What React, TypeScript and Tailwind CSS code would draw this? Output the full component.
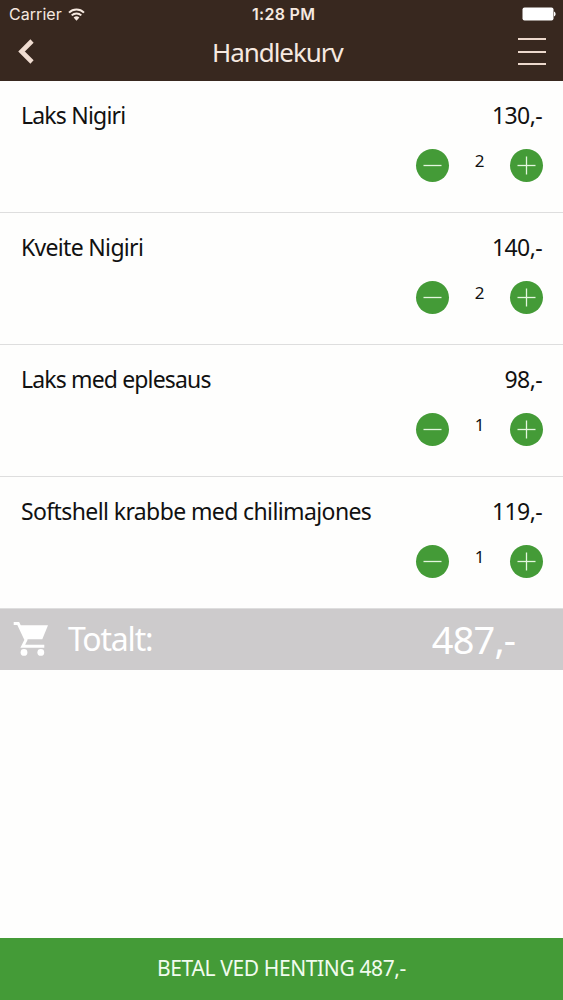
import { useState } from "react";

type CartItem = {
  id: number;
  name: string;
  unitPrice: number;
  quantity: number;
  nameClass: string;
};

const initialItems: CartItem[] = [
  { id: 1, name: "Laks Nigiri", unitPrice: 65, quantity: 2, nameClass: "tracking-[-0.8px]" },
  { id: 2, name: "Kveite Nigiri", unitPrice: 70, quantity: 2, nameClass: "tracking-[-0.68px]" },
  { id: 3, name: "Laks med eplesaus", unitPrice: 98, quantity: 1, nameClass: "tracking-[-0.85px]" },
  {
    id: 4,
    name: "Softshell krabbe med chilimajones",
    unitPrice: 119,
    quantity: 1,
    nameClass: "tracking-[-0.61px]",
  },
];

const StatusBar = () => (
  <div className="relative flex h-7 items-center justify-between pr-[7px] pl-[9px] font-['Inter','Liberation_Sans',sans-serif]">
    <div className="flex items-center gap-[6px]">
      <span className="text-[16px] tracking-[0.05px]">Carrier</span>
      <svg className="h-[13px] w-[17px]" viewBox="0 0 17 13" fill="none">
        <path d="M1 4.6a10.6 10.6 0 0 1 15 0" stroke="currentColor" strokeWidth="2" />
        <path d="M3.7 7.4a6.8 6.8 0 0 1 9.6 0" stroke="currentColor" strokeWidth="2" />
        <path d="M8.5 12.7 5.6 9.6a4.1 4.1 0 0 1 5.8 0Z" fill="currentColor" />
      </svg>
    </div>
    <span className="absolute left-[252px] text-[16px] font-semibold tracking-[0.3px]">
      1:28 PM
    </span>
    <svg className="h-[14px] w-[34px]" viewBox="0 0 34 14" fill="#fff">
      <rect x="0.5" y="0.5" width="31" height="13" rx="2" />
      <path d="M32 4.5c1 .4 1.6 1.3 1.6 2.5S33 9.1 32 9.5Z" />
    </svg>
  </div>
);

const Header = () => (
  <header className="h-[81px] shrink-0 bg-[#38281f] text-[#f6e9e0]">
    <StatusBar />
    <div className="relative flex h-[53px] items-center justify-between pr-[17px] pb-[7px] pl-[18px]">
      <button aria-label="Tilbake">
        <svg className="h-[25px] w-[16px]" viewBox="0 0 16 25" fill="none">
          <path d="M14 2 3.5 12.5 14 23" stroke="#f0ddd1" strokeWidth="4.6" />
        </svg>
      </button>
      <h1 className="absolute top-[4px] left-[212px] text-[26px] leading-[40px] tracking-[-1.05px]">
        Handlekurv
      </h1>
      <button aria-label="Meny" className="flex flex-col gap-[10.5px] pt-[1px]">
        <span className="h-[2px] w-7 bg-[#ecd8cc]" />
        <span className="h-[2px] w-7 bg-[#ecd8cc]" />
        <span className="h-[2px] w-7 bg-[#ecd8cc]" />
      </button>
    </div>
  </header>
);

const CartIcon = () => (
  <svg className="h-9 w-9" viewBox="0 0 36 36" fill="none">
    <path d="M7 4.3H35L29.3 18.3H13Z" fill="currentColor" />
    <path d="M0.7 2.4H5.2L13 18.8L9.8 25.2H31.3" stroke="currentColor" strokeWidth="3" />
    <circle cx="11" cy="31.4" r="3.4" fill="currentColor" />
    <circle cx="27.8" cy="31.4" r="3.4" fill="currentColor" />
  </svg>
);

const RoundButton = (props: { label: string; plus?: boolean; onClick: () => void }) => {
  const { label, plus, onClick } = props;

  return (
    <button
      aria-label={label}
      onClick={onClick}
      className="flex h-[33px] w-[33px] items-center justify-center rounded-full bg-[#449b37]"
    >
      <svg className="h-[19px] w-[19px]" viewBox="0 0 19 19" stroke="#e4f6df" strokeWidth="1.3">
        <path d="M0.5 9.5h18" />
        {plus && <path d="M9.5 0.5v18" />}
      </svg>
    </button>
  );
};

const CartRow = (props: { item: CartItem; onChange: (id: number, delta: number) => void }) => {
  const { item, onChange } = props;

  return (
    <li className="h-[132px] border-b border-[#dedede] pt-[17px] pr-[21px] pl-[21px]">
      <div className="flex justify-between text-[23px] leading-[34px]">
        <span className={item.nameClass}>{item.name}</span>
        <span className="tracking-[-0.6px]">{item.unitPrice * item.quantity},-</span>
      </div>
      <div className="mt-[17px] -mr-px flex justify-end">
        <RoundButton label="Fjern en" onClick={() => onChange(item.id, -1)} />
        <span className="w-[61px] text-center text-[17px] leading-6">{item.quantity}</span>
        <RoundButton label="Legg til en" plus onClick={() => onChange(item.id, 1)} />
      </div>
    </li>
  );
};

export default function App() {
  const [items, setItems] = useState(initialItems);
  const total = items.reduce((sum, item) => sum + item.unitPrice * item.quantity, 0);

  const handleChange = (id: number, delta: number) => {
    setItems((prev) =>
      prev.map((item) =>
        item.id === id ? { ...item, quantity: Math.max(0, item.quantity + delta) } : item
      )
    );
  };

  return (
    <div className="flex h-screen flex-col bg-[#fefefd] font-['Noto_Sans','Open_Sans',sans-serif] text-[#111]">
      <Header />
      <ul>
        {items.map((item) => (
          <CartRow key={item.id} item={item} onChange={handleChange} />
        ))}
      </ul>
      <div className="flex h-[61px] shrink-0 items-center bg-[#cdcbcc] pr-[48px] pb-[1px] pl-[13px] text-white">
        <CartIcon />
        <span className="ml-[19px] text-[32px] tracking-[-1.2px]">Totalt:</span>
        <span className="ml-auto text-[38px] tracking-[-0.9px]">{total},-</span>
      </div>
      <button className="mt-auto h-[62px] shrink-0 bg-[#449b37] pb-px text-[21px] tracking-[-0.38px] text-[#f1fbee]">
        BETAL VED HENTING {total},-
      </button>
    </div>
  );
}
